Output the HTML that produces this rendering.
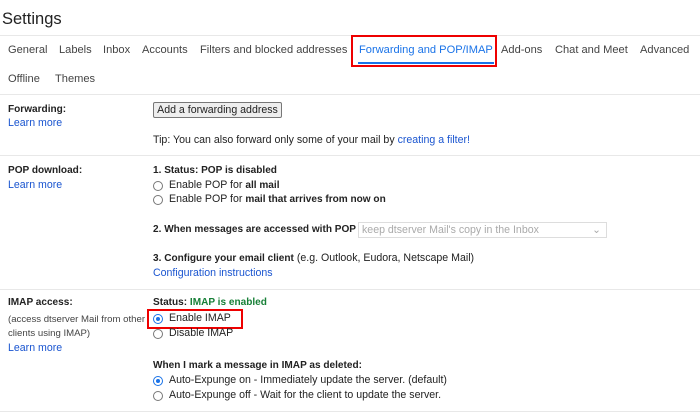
<!DOCTYPE html>
<html><head><style>
body{margin:0;width:700px;height:413px;background:#fff;font-family:"Liberation Sans",sans-serif;color:#222;position:relative;overflow:hidden}
.a{position:absolute;white-space:nowrap;font-size:10.6px;line-height:13px}
.t{position:absolute;white-space:nowrap;font-size:11.1px;color:#444;line-height:14px}
.hr{position:absolute;left:0;width:700px;height:1px;background:#e8e8e8}
b{font-weight:bold;color:#222;font-size:0.95em}
.l{color:#1a55d0}
.r{position:absolute;width:10px;height:10px;border:1px solid #777;border-radius:50%;box-sizing:border-box}
.r.on{border-color:#1a73e8}
.r.on::after{content:"";position:absolute;left:2px;top:2px;width:4px;height:4px;border-radius:50%;background:#1a73e8}
</style></head><body>
<div class="a" style="left:2px;top:9px;font-size:16.5px;line-height:20px;color:#222">Settings</div>
<div class="hr" style="top:35px"></div>
<div class="t" style="left:8px;top:43px">General</div>
<div class="t" style="left:59px;top:43px">Labels</div>
<div class="t" style="left:103px;top:43px">Inbox</div>
<div class="t" style="left:142px;top:43px">Accounts</div>
<div class="t" style="left:200px;top:43px">Filters and blocked addresses</div>
<div class="t" style="left:359px;top:43px;color:#1a73e8">Forwarding and POP/IMAP</div>
<div style="position:absolute;left:358px;top:62px;width:136px;height:2px;background:#1a73e8"></div>
<div style="position:absolute;left:351px;top:35px;width:146px;height:32px;border:2px solid #e00;box-sizing:border-box"></div>
<div class="t" style="left:501px;top:43px">Add-ons</div>
<div class="t" style="left:555px;top:43px">Chat and Meet</div>
<div class="t" style="left:640px;top:43px">Advanced</div>
<div class="t" style="left:8px;top:72px">Offline</div>
<div class="t" style="left:55px;top:72px">Themes</div>
<div class="hr" style="top:94px"></div>

<div class="a" style="left:8px;top:103px"><b>Forwarding:</b></div>
<div class="a l" style="left:8px;top:117px">Learn more</div>
<div style="position:absolute;left:153px;top:102px;width:129px;height:16px;border:1px solid #777;border-radius:2px;box-sizing:border-box;background:#eee;font-size:10.6px;line-height:14px;text-align:center">Add a forwarding address</div>
<div class="a" style="left:153px;top:134px">Tip: You can also forward only some of your mail by <span class="l">creating a filter!</span></div>
<div class="hr" style="top:155px"></div>

<div class="a" style="left:8px;top:164px"><b>POP download:</b></div>
<div class="a l" style="left:8px;top:179px">Learn more</div>
<div class="a" style="left:153px;top:164px"><b>1. Status: POP is disabled</b></div>
<div class="r" style="left:153px;top:181px"></div>
<div class="a" style="left:169px;top:179px">Enable POP for <b>all mail</b></div>
<div class="r" style="left:153px;top:195px"></div>
<div class="a" style="left:169px;top:193px">Enable POP for <b>mail that arrives from now on</b></div>
<div class="a" style="left:153px;top:223px"><b>2. When messages are accessed with POP</b></div>
<div style="position:absolute;left:358px;top:222px;width:249px;height:16px;border:1px solid #ddd;box-sizing:border-box;font-size:10.6px;line-height:14px;color:#aaa;padding-left:3px">keep dtserver Mail's copy in the Inbox<span style="position:absolute;right:5px;top:0">&#8964;</span></div>
<div class="a" style="left:153px;top:252px"><b>3. Configure your email client</b> (e.g. Outlook, Eudora, Netscape Mail)</div>
<div class="a l" style="left:153px;top:267px">Configuration instructions</div>
<div class="hr" style="top:289px"></div>

<div class="a" style="left:8px;top:296px"><b>IMAP access:</b></div>
<div class="a" style="left:8px;top:313px;font-size:9.6px;color:#444">(access dtserver Mail from other</div>
<div class="a" style="left:8px;top:327px;font-size:9.6px;color:#444">clients using IMAP)</div>
<div class="a l" style="left:8px;top:342px">Learn more</div>
<div class="a" style="left:153px;top:296px"><b>Status: </b><b style="color:#188038">IMAP is enabled</b></div>
<div class="r on" style="left:153px;top:314px"></div>
<div class="a" style="left:169px;top:312px">Enable IMAP</div>
<div style="position:absolute;left:147px;top:309px;width:96px;height:20px;border:2px solid #e00;box-sizing:border-box"></div>
<div class="r" style="left:153px;top:329px"></div>
<div class="a" style="left:169px;top:327px">Disable IMAP</div>
<div class="a" style="left:153px;top:359px"><b>When I mark a message in IMAP as deleted:</b></div>
<div class="r on" style="left:153px;top:376px"></div>
<div class="a" style="left:169px;top:374px">Auto-Expunge on - Immediately update the server. (default)</div>
<div class="r" style="left:153px;top:391px"></div>
<div class="a" style="left:169px;top:389px">Auto-Expunge off - Wait for the client to update the server.</div>
<div class="hr" style="top:411px"></div>
</body></html>
